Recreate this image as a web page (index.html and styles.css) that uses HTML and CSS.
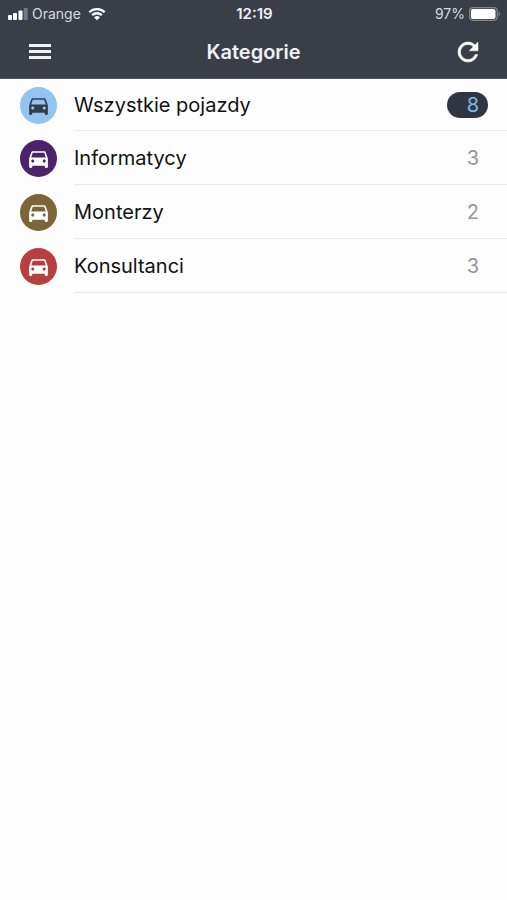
FILE: index.html
```html
<!DOCTYPE html>
<html lang="pl">
<head>
<meta charset="utf-8">
<meta name="viewport" content="width=device-width, initial-scale=1">
<title>Kategorie</title>
<link rel="stylesheet" href="styles.css">
</head>
<body>
<svg class="sprite" aria-hidden="true">
  <symbol id="car" viewBox="0 0 24 24">
    <path d="M18.92 6.01C18.72 5.42 18.16 5 17.5 5h-11c-.66 0-1.21.42-1.42 1.01L3 12v8c0 .55.45 1 1 1h1c.55 0 1-.45 1-1v-1h12v1c0 .55.45 1 1 1h1c.55 0 1-.45 1-1v-8l-2.08-5.99zM6.500 16c-.83 0-1.500-.67-1.500-1.500S5.670 13 6.500 13s1.500.67 1.500 1.500S7.330 16 6.500 16zm11 0c-.83 0-1.500-.67-1.500-1.500s.67-1.500 1.500-1.500 1.500.67 1.500 1.500-.67 1.500-1.500 1.500zM5 11l1.500-4.500h11L19 11H5z"/>
  </symbol>
</svg>
<header class="header">
  <div class="status">
    <div class="carrier">
      <svg class="signal" viewBox="0 0 20 12" aria-hidden="true">
        <rect x="0" y="7" width="4" height="5" rx="1"/>
        <rect x="5" y="5" width="4" height="7" rx="1"/>
        <rect x="10.500" y="2.500" width="4" height="9.500" rx="1"/>
        <rect x="15.700" y="0" width="4" height="12" rx="1" opacity=".3"/>
      </svg>
      <span>Orange</span>
      <svg class="wifi" viewBox="0 0 18 14" aria-hidden="true">
        <path d="M1.300 5.200a11 11 0 0 1 15.400 0M4.200 8.200a6.900 6.900 0 0 1 9.600 0" fill="none" stroke="currentColor" stroke-width="2.300"/>
        <path d="M9 13.300 6.100 10.400a4.200 4.200 0 0 1 5.800 0z"/>
      </svg>
    </div>
    <time class="clock">12:19</time>
    <div class="power">
      <span>97%</span>
      <svg class="battery" viewBox="0 0 32 14" aria-hidden="true">
        <rect x=".7" y=".7" width="27.600" height="12.600" rx="3.500" fill="none" stroke="#85878d" stroke-width="1.200"/>
        <rect x="2" y="2" width="24.500" height="10" rx="2"/>
        <path d="M29.700 4.800c1.800.8 1.800 3.600 0 4.400z" fill="#85878d"/>
      </svg>
    </div>
  </div>
  <div class="toolbar">
    <button class="tool" type="button" aria-label="Menu">
      <svg class="menu-icon" viewBox="0 0 22 16" aria-hidden="true"><path d="M0 0h22v3H0zM0 6h22v3H0zM0 12h22v3H0z"/></svg>
    </button>
    <h1 class="title">Kategorie</h1>
    <button class="tool tool-end" type="button" aria-label="Odśwież">
      <svg class="refresh-icon" viewBox="0 0 24 24" aria-hidden="true"><path d="M17.650 6.350C16.200 4.900 14.210 4 12 4c-4.420 0-7.990 3.580-7.990 8s3.570 8 7.990 8c3.730 0 6.840-2.550 7.730-6h-2.080c-.82 2.330-3.040 4-5.650 4-3.310 0-6-2.690-6-6s2.690-6 6-6c1.660 0 3.140.69 4.220 1.780L13 11h7V4l-2.350 2.350z" stroke="currentColor" stroke-width=".4"/></svg>
    </button>
  </div>
</header>
<main>
  <ul class="list">
    <li class="item">
      <span class="avatar avatar-all"><svg viewBox="0 0 24 24" aria-hidden="true"><use href="#car"/></svg></span>
      <a class="row" href="#"><span>Wszystkie pojazdy</span><span class="count count-active">8</span></a>
    </li>
    <li class="item">
      <span class="avatar avatar-it"><svg viewBox="0 0 24 24" aria-hidden="true"><use href="#car"/></svg></span>
      <a class="row" href="#"><span>Informatycy</span><span class="count">3</span></a>
    </li>
    <li class="item">
      <span class="avatar avatar-fitters"><svg viewBox="0 0 24 24" aria-hidden="true"><use href="#car"/></svg></span>
      <a class="row" href="#"><span>Monterzy</span><span class="count">2</span></a>
    </li>
    <li class="item">
      <span class="avatar avatar-consultants"><svg viewBox="0 0 24 24" aria-hidden="true"><use href="#car"/></svg></span>
      <a class="row" href="#"><span>Konsultanci</span><span class="count">3</span></a>
    </li>
  </ul>
</main>
</body>
</html>
```
FILE: styles.css
```css
* {
  box-sizing: border-box;
}

body {
  margin: 0;
  min-height: 100vh;
  background: #fdfdfd;
  color: #111;
  font-family: Inter, "Liberation Sans", sans-serif;
}

svg {
  display: block;
  fill: currentColor;
}

.sprite {
  display: none;
}

.header {
  background: #3a3e47;
  color: #f0f1f6;
  border-bottom: 1px solid #55565d;
}

.status {
  display: grid;
  grid-template-columns: 1fr auto 1fr;
  align-items: center;
  height: 26px;
  padding: 2px 6px 0 8px;
  font-size: 14px;
  line-height: 20px;
}

.carrier,
.power {
  display: flex;
  align-items: center;
  gap: 4px;
  color: #d8dae0;
}

.power {
  justify-content: flex-end;
}

.signal {
  width: 20px;
  height: 12px;
  color: #fff;
}

.wifi {
  width: 18px;
  height: 14px;
  margin-left: 3px;
  color: #fff;
}

.battery {
  width: 32px;
  height: 14px;
  color: #fff;
}

.clock {
  font-size: 15px;
  font-weight: 600;
}

.toolbar {
  display: grid;
  grid-template-columns: 1fr auto 1fr;
  align-items: center;
  height: 52px;
  padding: 0 24px;
}

.tool {
  display: flex;
  align-items: center;
  justify-self: start;
  height: 44px;
  padding: 0 5px;
  border: 0;
  background: none;
  color: inherit;
}

.tool-end {
  justify-self: end;
  padding: 0;
}

.menu-icon {
  width: 22px;
  height: 16px;
}

.refresh-icon {
  width: 30px;
  height: 30px;
  color: #fff;
}

.title {
  margin: 0;
  font-size: 20px;
  font-weight: 600;
  line-height: 28px;
}

.list {
  margin: 0;
  padding: 0;
  list-style: none;
}

.item {
  display: flex;
  align-items: center;
  gap: 17px;
  height: 54px;
  padding-left: 20px;
}

.item:first-child {
  height: 52px;
}

.avatar {
  display: flex;
  align-items: center;
  justify-content: center;
  width: 37px;
  height: 37px;
  border-radius: 50%;
  color: #fff;
}

.avatar svg {
  width: 25px;
  height: 25px;
}

.avatar-all {
  background: #93c3f0;
  color: #343c4a;
}

.avatar-it {
  background: #4c226a;
}

.avatar-fitters {
  background: #7d6539;
}

.avatar-consultants {
  background: #b5403d;
}

.row {
  display: flex;
  flex: 1;
  align-items: center;
  justify-content: space-between;
  height: 100%;
  padding-right: 19px;
  border-bottom: 1px solid #e9e9eb;
  color: inherit;
  font-size: 20px;
  line-height: 26px;
  text-decoration: none;
}

.count {
  min-width: 41px;
  padding-right: 9px;
  border-radius: 13px;
  color: #959597;
  text-align: right;
}

.count-active {
  background: #303540;
  color: #84b8e9;
}
```
